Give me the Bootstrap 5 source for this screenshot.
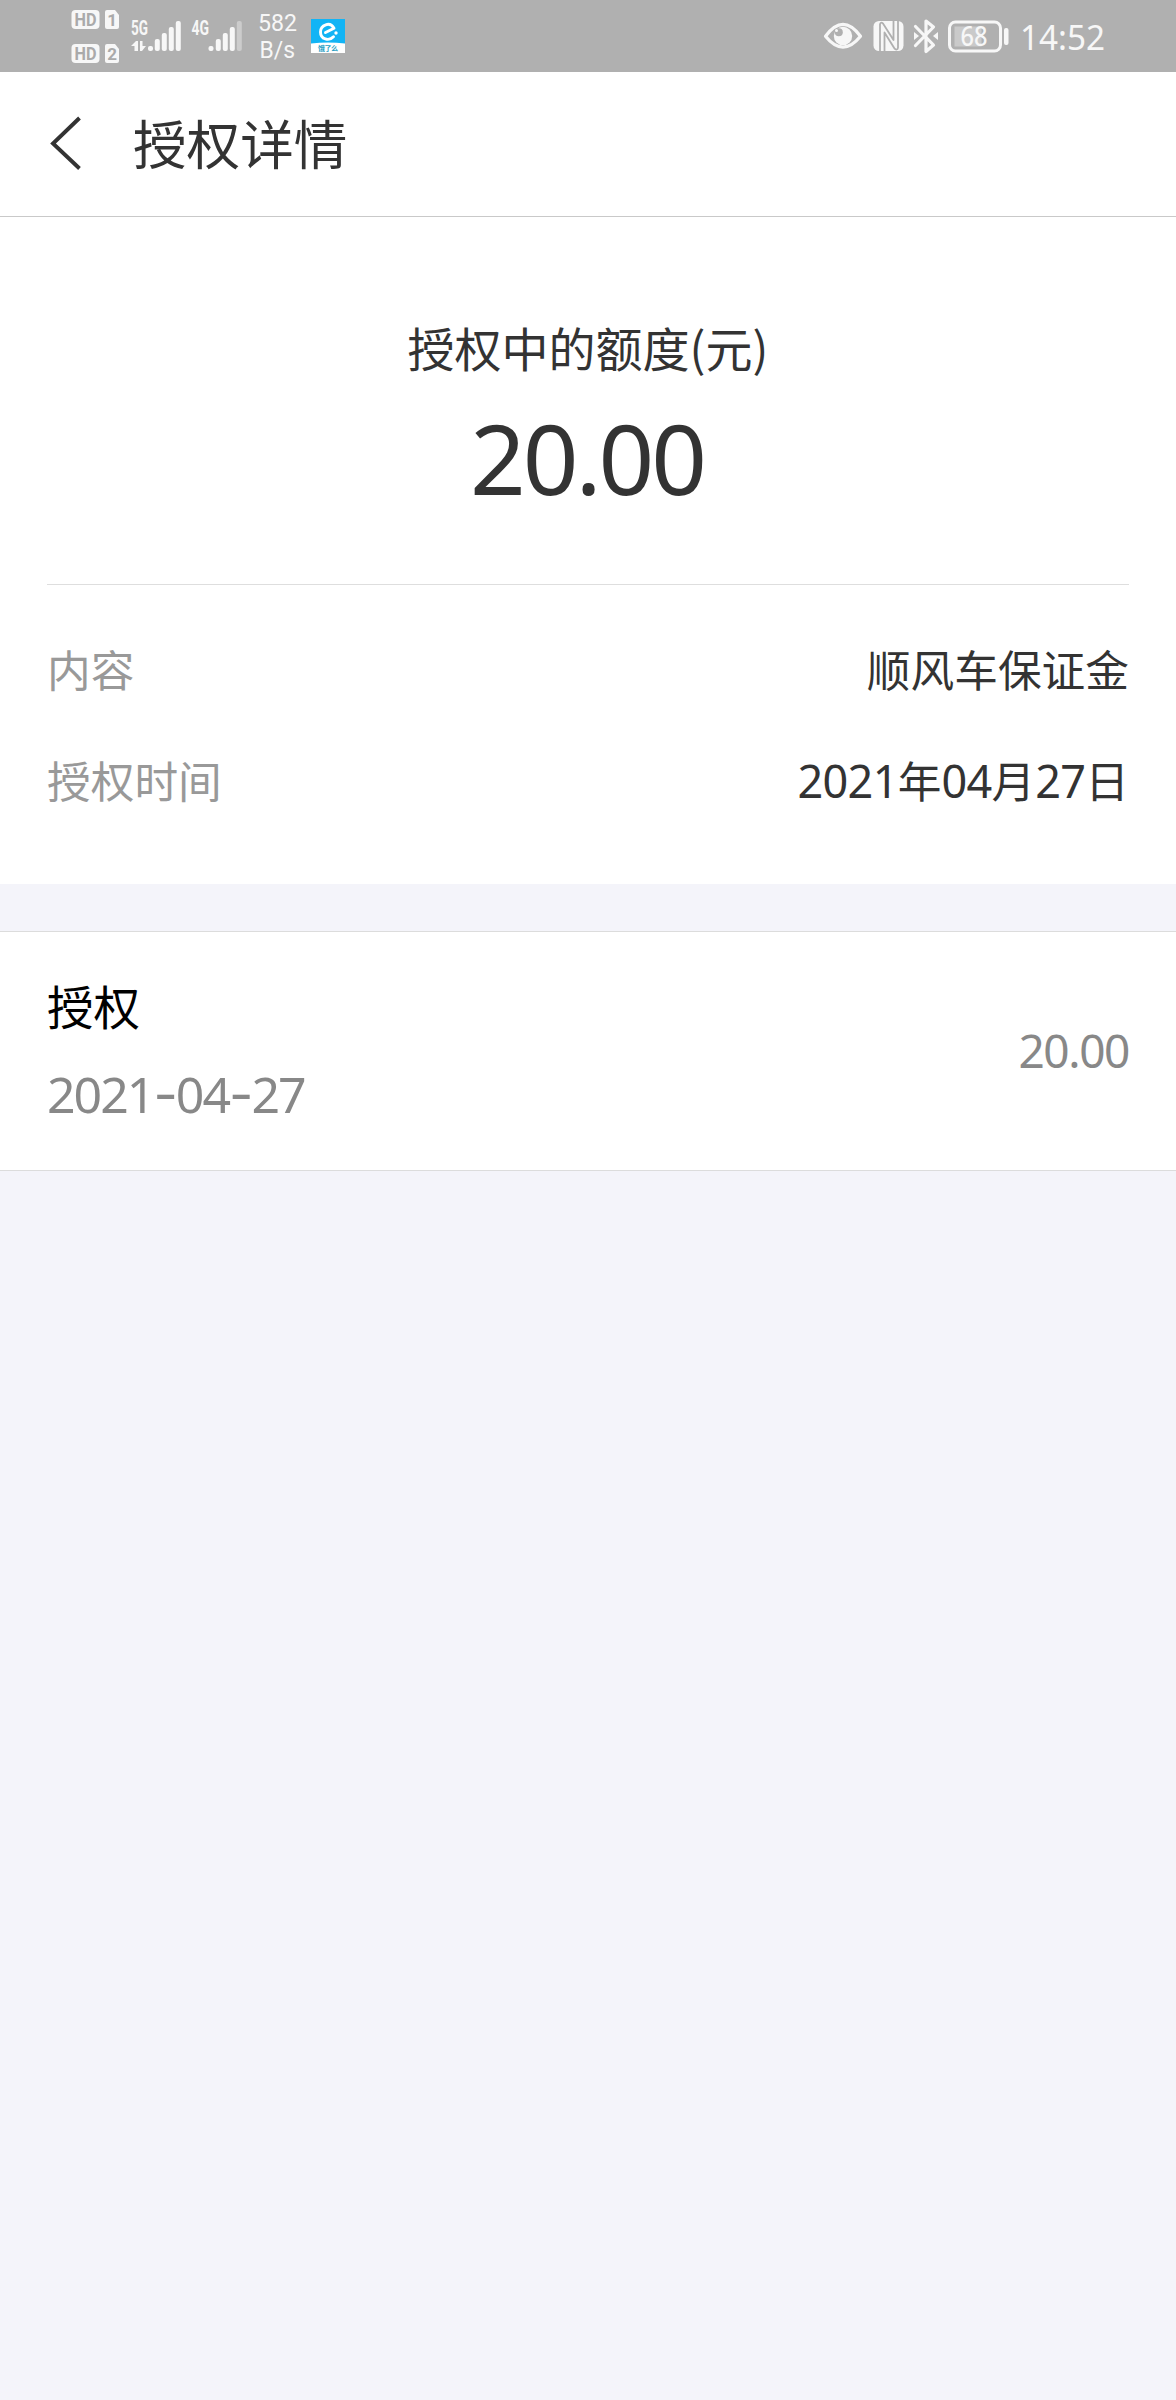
<!DOCTYPE html>
<html lang="zh-CN">
<head>
<meta charset="utf-8">
<meta name="viewport" content="width=device-width, initial-scale=1">
<title>授权详情</title>
<link href="https://cdn.jsdelivr.net/npm/bootstrap@5.3.0/dist/css/bootstrap.min.css" rel="stylesheet">
<style>
body{background:#f4f4fa;color:#333;font-family:"Noto Sans","Noto Sans CJK SC",sans-serif;min-height:2400px}
.cjk{font-family:"Noto Sans CJK SC",sans-serif}
.status-bar{height:72px;background:#b0b0b0;padding:0 64px 0 71px}
.status-bar svg{display:block;flex:none;fill:#f7f7f7}
.status-bar text{font-family:Roboto,sans-serif}
.title-bar{height:145px;padding:0 0 2px 49px;border-bottom:1px solid #c9c9c9}
.title-bar h1{font-size:53.6px;line-height:72px;margin:0 0 3px 50px;font-weight:400}
.quota{height:367px;padding-top:95px}
.quota-label{font-size:47px;line-height:70px}
.quota-sum{font-size:97.5px;line-height:120px;letter-spacing:-3px;margin:16px 2px 0 0}
.details{margin:0 47px;border-top:1px solid #dedede;height:300px;padding-top:30px}
.detail-row{height:111px;font-size:43.7px;line-height:106px}
.detail-row dt{color:#999;font-weight:400}
.detail-row dd{margin:0}
.num{font-family:"Noto Sans",sans-serif;font-size:45px;letter-spacing:-.7px}
.record{margin-top:47px;height:240px;border-top:1px solid #dcdcdc;border-bottom:1px solid #dcdcdc;padding:33px 47px 0}
.record-name{color:#000;font-size:46.5px;line-height:80px}
.record-date{color:#888;font-size:50px;line-height:80px;letter-spacing:-2px;margin-top:9px}
.record-date i{font-family:Inter,sans-serif;font-style:normal;font-size:53px}
.record-sum{color:#888;font-size:46px;line-height:60px;letter-spacing:-1.4px;margin-top:55px}
</style>
<script src="https://cdn.jsdelivr.net/npm/bootstrap@5.3.0/dist/js/bootstrap.bundle.min.js"></script>
</head>
<body>
<header class="status-bar d-flex justify-content-between">
  <div class="d-flex">
    <!-- HD voice badges for both SIM cards -->
    <svg width="54" height="72" viewBox="71 0 54 72">
      <rect x="71.500" y="10" width="28" height="19" rx="4"/><path d="M107 10h8l4 5v12q0 2-2 2h-10q-2 0-2-2V12q0-2 2-2z"/>
      <rect x="71.500" y="44" width="28" height="19" rx="4"/><path d="M107 44h8l4 5v12q0 2-2 2h-10q-2 0-2-2V46q0-2 2-2z"/>
      <g fill="#aaa" font-weight="700" font-size="19"><text x="74.500" y="26.300" textLength="22" lengthAdjust="spacingAndGlyphs">HD</text><text x="74.500" y="60.300" textLength="22" lengthAdjust="spacingAndGlyphs">HD</text><text x="107.300" y="26" font-size="17">1</text><text x="107.300" y="60" font-size="17">2</text></g>
    </svg>
    <svg width="62" height="72" viewBox="125 0 62 72">
      <text x="131" y="34.500" font-size="19.500" font-weight="700" textLength="17" lengthAdjust="spacingAndGlyphs">5G</text>
      <path d="M131 46l5-5h2v10h-3.500v-5zM140 41h2.500v5h3.500l-4 5h-2z"/>
      <rect x="148" y="46" width="5" height="5" rx="2"/><rect x="154.800" y="39" width="5" height="12" rx="2"/><rect x="161.800" y="33" width="5" height="18" rx="2"/><rect x="168.800" y="27" width="5" height="24" rx="2"/><rect x="175.800" y="21" width="5" height="30" rx="2"/>
    </svg>
    <svg width="60" height="72" viewBox="187 0 60 72">
      <text x="191.500" y="34.500" font-size="19.500" font-weight="700" textLength="17.500" lengthAdjust="spacingAndGlyphs">4G</text>
      <rect x="208.500" y="46" width="5" height="5" rx="2"/><rect x="215.800" y="39" width="5" height="12" rx="2"/><rect x="222.800" y="33" width="5" height="18" rx="2"/><rect x="229.800" y="27" width="5" height="24" rx="2"/><rect x="236.800" y="21" width="5" height="30" rx="2" opacity=".4"/>
    </svg>
    <svg width="58" height="72" viewBox="247 0 58 72">
      <text x="258" y="31" font-size="23.500" textLength="39" lengthAdjust="spacingAndGlyphs">582</text>
      <text x="259.500" y="58" font-size="23.500" textLength="35.500" lengthAdjust="spacingAndGlyphs">B/s</text>
    </svg>
    <svg width="45" height="72" viewBox="305 0 45 72">
      <path d="M311 19h34v34h-34z" fill="#fff"/><path d="M311 19h34v24.500q-17-2-34 0z" fill="#12b4f5"/>
      <path d="M325.500 32.500l8.500-4.200C330 21 320.500 25 320.500 32c0 7.500 8.500 9.500 13 4.800" fill="none" stroke="#fff" stroke-width="2.900" stroke-linejoin="round" stroke-linecap="round"/><circle cx="336" cy="33" r="1.700" fill="#fff"/>
      <text x="318" y="51" font-size="7" font-weight="700" fill="#2b9fc4" textLength="20" style="font-family:'Noto Sans CJK SC',sans-serif">饿了么</text>
    </svg>
  </div>
  <div class="d-flex">
    <svg width="44" height="72" viewBox="823 0 44 72">
      <path d="M825.500 36.300Q843 12.500 860.500 36.300Q843 58 825.500 36.300z" fill="none" stroke="#f7f7f7" stroke-width="3.200" stroke-linejoin="round"/>
      <circle cx="843" cy="36" r="9.200"/><circle cx="838.800" cy="32.300" r="4" fill="#b0b0b0"/><circle cx="836.500" cy="30.500" r="1.500"/>
    </svg>
    <svg width="42" height="72" viewBox="867 0 42 72">
      <rect x="873.500" y="21" width="30" height="30" rx="5.500"/>
      <path d="M880 51V24.500q.5-3 3-1L893.500 40V21M884.500 51V32.500L894.500 48.500q3 2.500 3.500-1V21" fill="none" stroke="#b0b0b0" stroke-width="1.800" stroke-linejoin="round"/>
    </svg>
    <svg width="34" height="72" viewBox="909 0 34 72">
      <path d="M915.500 26.500l18 18.500-7.500 6.500V21l7.500 6-18 18.500" fill="none" stroke="#f7f7f7" stroke-width="3.200" stroke-linejoin="round" stroke-linecap="round"/>
      <path d="M914 32l5 4-5 4zM938 32l-5 4 5 4z"/>
    </svg>
    <svg width="70" height="72" viewBox="943 0 70 72">
      <rect x="954.500" y="26.500" width="27" height="20" fill="#cacaca"/>
      <rect x="949.500" y="22" width="51" height="29" rx="6" fill="none" stroke="#f7f7f7" stroke-width="3"/>
      <rect x="1004" y="28" width="4.500" height="17" rx="2"/>
      <text x="960.500" y="46" font-size="26.500" font-weight="500" textLength="27" lengthAdjust="spacingAndGlyphs" style="font-family:'Noto Sans',sans-serif">68</text>
    </svg>
    <svg width="99" height="72" viewBox="1013 0 99 72">
      <text x="1020" y="50" font-size="35" textLength="85" lengthAdjust="spacingAndGlyphs" style="font-family:'Noto Sans',sans-serif">14:52</text>
    </svg>
  </div>
</header>
<main>
  <section class="bg-white">
    <div class="title-bar d-flex align-items-center">
      <svg class="d-block" width="34" height="54" viewBox="0 0 34 54" fill="none" stroke="#333" stroke-width="3.900"><path d="M30.500 2L4 27.500l26.500 25"/></svg>
      <h1 class="cjk">授权详情</h1>
    </div>
    <div class="quota text-center">
      <div class="quota-label cjk">授权中的额度<span>(元)</span></div>
      <div class="quota-sum">20.00</div>
    </div>
    <dl class="details mb-0">
      <div class="detail-row cjk d-flex justify-content-between"><dt>内容</dt><dd>顺风车保证金</dd></div>
      <div class="detail-row cjk d-flex justify-content-between"><dt>授权时间</dt><dd><span class="num">2021</span>年<span class="num">04</span>月<span class="num">27</span>日</dd></div>
    </dl>
  </section>
  <section class="record bg-white d-flex justify-content-between align-items-start">
    <div>
      <div class="record-name cjk">授权</div>
      <div class="record-date">2021<i>-</i>04<i>-</i>27</div>
    </div>
    <div class="record-sum">20.00</div>
  </section>
</main>
</body>
</html>
